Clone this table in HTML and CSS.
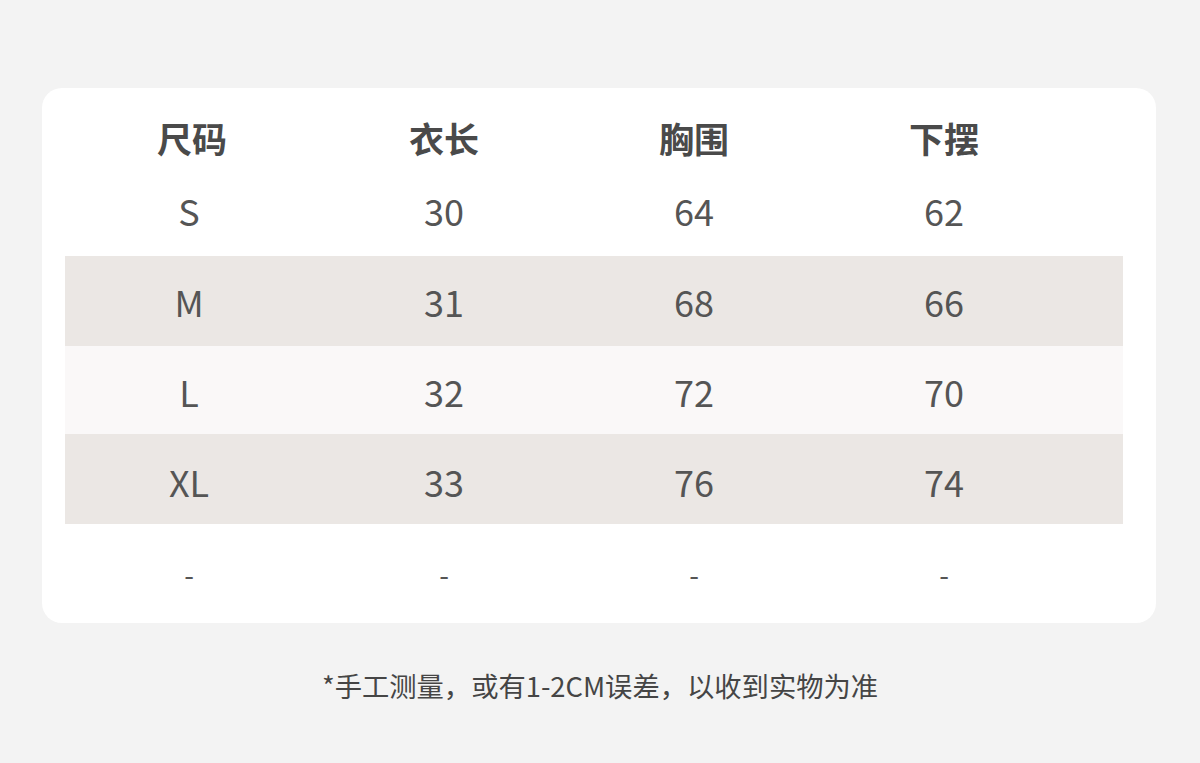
FILE: index.html
```html
<!DOCTYPE html>
<html lang="zh">
<head>
<meta charset="utf-8">
<link rel="stylesheet" href="styles.css">
</head>
<body>
<div class="page">
  <div class="card">
    <div class="row head"><div>尺码</div><div>衣长</div><div>胸围</div><div>下摆</div></div>
    <div class="row r-s"><div>S</div><div>30</div><div>64</div><div>62</div></div>
    <div class="row r-m band"><div>M</div><div>31</div><div>68</div><div>66</div></div>
    <div class="row r-l light"><div>L</div><div>32</div><div>72</div><div>70</div></div>
    <div class="row r-xl band"><div>XL</div><div>33</div><div>76</div><div>74</div></div>
    <div class="row r-d"><div>-</div><div>-</div><div>-</div><div>-</div></div>
  </div>
  <p class="note">*手工测量，或有1-2CM误差，以收到实物为准</p>
</div>
</body>
</html>
```
FILE: styles.css
```css
html, body {
  margin: 0;
  padding: 0;
  background: #f3f3f3;
}
.page {
  width: 1200px;
  height: 763px;
  padding-top: 88px;
  box-sizing: border-box;
  font-family: "Noto Sans CJK SC", "Noto Sans", sans-serif;
  color: #4b4b4b;
}
.card {
  margin-left: 42px;
  width: 1114px;
  height: 535px;
  box-sizing: border-box;
  padding: 10px 33px 0 23px;
  background: #ffffff;
  border-radius: 20px;
}
.row {
  display: grid;
  grid-template-columns: 248px 262px 238px 262px 1fr;
  align-items: center;
  text-align: center;
  font-size: 36px;
  font-weight: 400;
  color: #555555;
  box-sizing: border-box;
}
.row > div { line-height: 1; }
.head {
  height: 78px;
  font-size: 35px;
  font-weight: 700;
  color: #4a4a4a;
}
.head > div:first-child { padding-left: 6px; }
.r-s { height: 80px; padding-bottom: 13px; }
.r-m { height: 90px; padding-bottom: 1px; }
.r-l { height: 88px; padding-top: 2px; }
.r-xl { height: 90px; padding-top: 4px; }
.r-d { height: 106px; font-size: 28px; padding-bottom: 6px; }
.band { background: #ebe7e4; }
.light { background: #faf8f8; }
.note {
  margin: 49px 0 0;
  text-align: center;
  font-size: 27.3px;
  color: #454545;
  line-height: 1;
}
```
